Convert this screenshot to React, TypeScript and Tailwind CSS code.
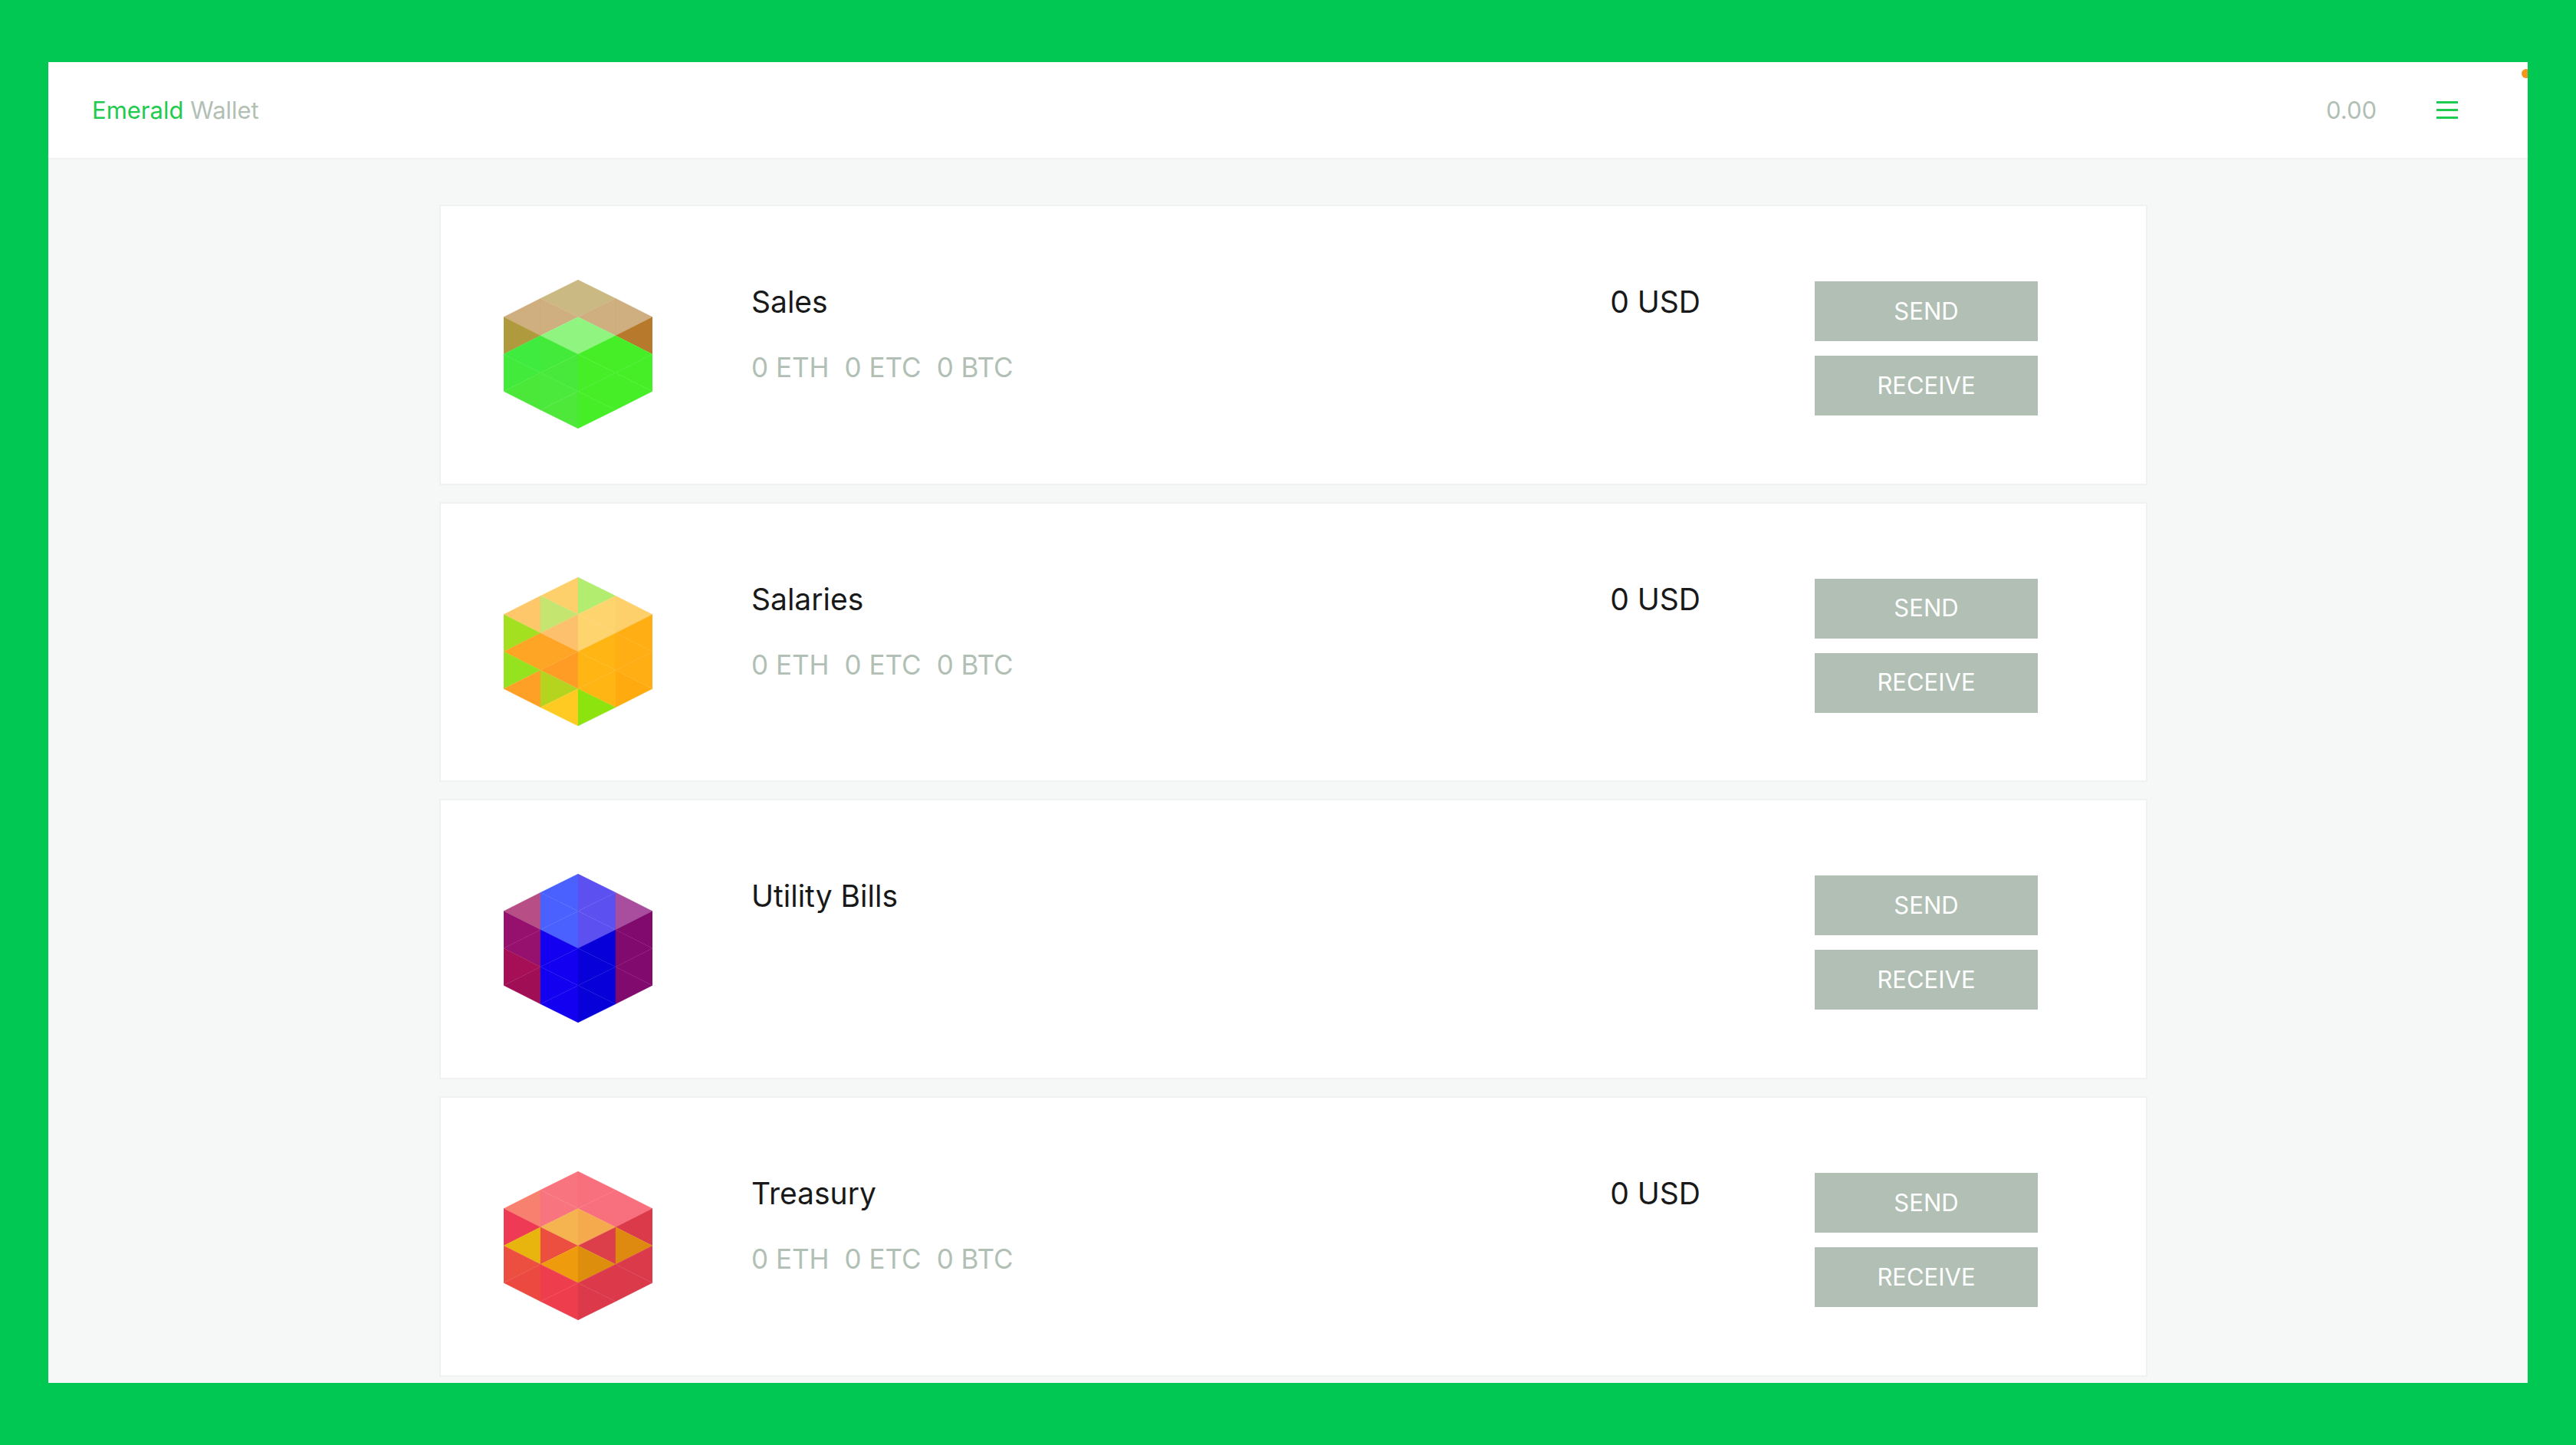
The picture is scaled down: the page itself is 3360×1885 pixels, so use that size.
import React from 'react';

// isometric 24-triangle grid, strips left to right, triangles top to bottom
const X = [0, 48, 97, 146, 194];
const Y0 = [48.5, 97, 145.5];
const Y1 = [24.25, 72.75, 121.25, 169.75];
const Y2 = [0, 48.5, 97, 145.5, 194];

const stripPoints = (xa: number, ya: number[], xb: number, yb: number[]) => {
  // walk down the strip, zig-zagging between the two columns
  const tris: string[] = [];
  const wider = yb.length > ya.length;
  const a = wider ? yb : ya;
  const b = wider ? ya : yb;
  const xA = wider ? xb : xa;
  const xB = wider ? xa : xb;
  for (let i = 0; i < b.length; i++) {
    tris.push(`${xA},${a[i]} ${xB},${b[i]} ${xA},${a[i + 1]}`);
    if (i < b.length - 1) tris.push(`${xB},${b[i]} ${xA},${a[i + 1]} ${xB},${b[i + 1]}`);
  }
  return tris;
};

const buildTriangles = () => [
  ...stripPoints(X[0], Y0, X[1], Y1),
  ...stripPoints(X[1], Y1, X[2], Y2),
  ...stripPoints(X[2], Y2, X[3], Y1),
  ...stripPoints(X[3], Y1, X[4], Y0),
];

const triangles = buildTriangles();

const HexIcon: React.FC<{ colors: string[] }> = ({ colors }) => (
  <svg width="194" height="194" viewBox="0 0 194 194" className="block shrink-0">
    {triangles.map((p, i) => (
      <polygon key={i} points={p} fill={colors[i]} stroke={colors[i]} strokeWidth="0.25" />
    ))}
  </svg>
);

const T = '#CFAE7F';
const G = '#46EE28';
const salesColors = [
  T, '#AF9A3D', '#3FEB3F', '#42EA3C', '#4BE83A',
  '#CBB983', T, '#90F580', '#44EA3A', '#48E93A', '#4AE93C', '#4EE83A',
  '#CBB983', T, '#90F580', G, G, G, G,
  T, '#B7792C', G, G, G,
];
const salariesColors = [
  '#FDC76A', '#A2E020', '#FFA526', '#94E31E', '#FFA026',
  '#FDD06C', '#C4E670', '#FDC06C', '#FFA526', '#FF9C26', '#B4D420', '#FFCA22',
  '#B2ED70', '#FDD46E', '#FDD46E', '#FFB514', '#FFB514', '#FFB514', '#8CE30E',
  '#FDD06C', '#FFAE14', '#FFAE14', '#FFAE14', '#FFAA0E',
];
const utilityColors = [
  '#B84E86', '#96106E', '#96106E', '#A60F55', '#A00F55',
  '#4A60FF', '#4A60FF', '#4A60FF', '#1400F0', '#1400F0', '#1400F0', '#1400F0',
  '#5C50F0', '#5C50F0', '#5C50F0', '#0800D8', '#0800D8', '#0800D8', '#0800D8',
  '#A94E9E', '#800A6E', '#800A6E', '#800A6E', '#800A6E',
];
const treasuryColors = [
  '#F8806E', '#EE3A55', '#E8B40E', '#EC4F40', '#EC4A40',
  '#F8747E', '#F8747E', '#F5B450', '#EC4F40', '#EE9C0E', '#EE3E4E', '#EE3E4E',
  '#F8707E', '#F8707E', '#F5AA4E', '#DC3F4A', '#DC8E0C', '#DC3A4A', '#DC3A4A',
  '#F8707E', '#DA3A4A', '#DE8A10', '#DA3A4A', '#DA3A4A',
];

const accounts = [
  { name: 'Sales', usd: true, colors: salesColors },
  { name: 'Salaries', usd: true, colors: salariesColors },
  { name: 'Utility Bills', usd: false, colors: utilityColors },
  { name: 'Treasury', usd: true, colors: treasuryColors },
];

const ActionButton: React.FC<{ label: string }> = ({ label }) => (
  <button className="w-[291px] h-[78px] bg-[#B1BFB5] text-white text-[31px] flex items-center justify-center">
    {label}
  </button>
);

const App: React.FC = () => {
  return (
    <div className="h-[1885px] bg-[#00C853] px-[63px] py-[81px] font-['Inter',sans-serif]">
      <div className="relative h-full bg-[#F6F8F7] overflow-hidden">
        <div className="absolute -right-[4px] top-[9px] w-[12px] h-[12px] rounded-full bg-[#F7941D]"></div>

        {/* Header */}
        <header className="h-[127px] bg-white border-b-2 border-[#F0F2F1] flex items-center justify-between pl-[57px] pr-[91px]">
          <div className="text-[31px] mt-[2px]">
            <span className="text-[#1FCB4F]">Emerald</span> <span className="text-[#B1BFB5]">Wallet</span>
          </div>
          <div className="flex items-center gap-[78px]">
            <span className="text-[31px] text-[#B1BFB5] mt-[2px]">0.00</span>
            <div className="w-[28px] flex flex-col gap-[7px]">
              <span className="block h-[3px] bg-[#1FCB4F]"></span>
              <span className="block h-[3px] bg-[#1FCB4F]"></span>
              <span className="block h-[3px] bg-[#1FCB4F]"></span>
            </div>
          </div>
        </header>

        {/* Accounts */}
        <main className="w-[2228px] ml-[510px] mt-[59px] flex flex-col gap-[22px]">
          {accounts.map((a) => (
            <div key={a.name} className="h-[365.67px] shrink-0 bg-white border-2 border-[#F0F2F1] flex pl-[82px] pr-[141px] pt-[96px]">
              <HexIcon colors={a.colors} />
              <div className="flex-1 ml-[129px]">
                <div className="text-[39px] leading-[48px] text-[#191919] mt-[5px]">{a.name}</div>
                {a.usd && (
                  <div className="flex gap-[20px] text-[35px] leading-[44px] text-[#B1BFB5] mt-[39px]">
                    <span>0 ETH</span>
                    <span>0 ETC</span>
                    <span>0 BTC</span>
                  </div>
                )}
              </div>
              {a.usd && <div className="text-[39px] leading-[48px] text-[#191919] mt-[5px] mr-[149px]">0 USD</div>}
              <div className="flex flex-col gap-[19px] pt-[2px]">
                <ActionButton label="SEND" />
                <ActionButton label="RECEIVE" />
              </div>
            </div>
          ))}
        </main>
      </div>
    </div>
  );
};

export default App;
